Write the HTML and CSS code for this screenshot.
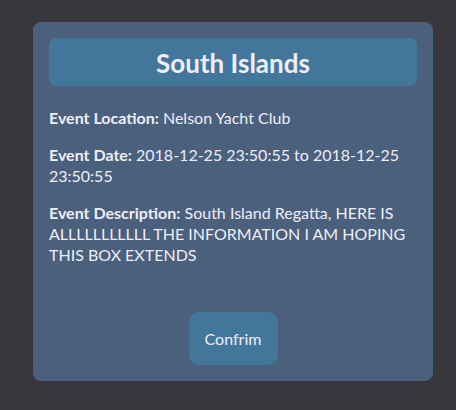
FILE: index.html
```html
<!DOCTYPE html>
<html lang="en">
<head>
<meta charset="utf-8">
<title>South Islands</title>
<link rel="stylesheet" href="styles.css">
</head>
<body>
<div class="page">
  <div class="card">
    <h2 class="card-title">South Islands</h2>
    <p class="field"><b>Event Location:</b> Nelson Yacht Club</p>
    <p class="field"><b>Event Date:</b> 2018-12-25 23:50:55 to 2018-12-25 23:50:55</p>
    <p class="field"><b>Event Description:</b> South Island Regatta, HERE IS ALLLLLLLLLLL THE INFORMATION I AM HOPING THIS BOX EXTENDS</p>
    <button class="confirm" type="button">Confrim</button>
  </div>
</div>
</body>
</html>
```

FILE: styles.css
```css
html, body {
  margin: 0;
  padding: 0;
  background: #38373c;
}

body {
  font-family: Lato, "Open Sans", sans-serif;
  color: #eeeef8;
  font-size: 16px;
}

.page {
  padding: 22px 23px 29px 33px;
  display: flex;
}

.card {
  box-sizing: border-box;
  width: 400px;
  height: 359px;
  background: #4a607c;
  border-radius: 8px;
  padding: 16px;
  display: flex;
  flex-direction: column;
}

.card-title {
  margin: 0;
  background: #43769b;
  border-radius: 7px;
  height: 48px;
  display: flex;
  align-items: center;
  justify-content: center;
  font-size: 26px;
  font-weight: 700;
  padding-top: 2px;
  box-sizing: border-box;
}

.field {
  margin: 21px 0 0;
  line-height: 21px;
}

.field + .field {
  margin-top: 16px;
}

.field b {
  font-weight: 700;
}

.confirm {
  margin: auto auto 0;
  width: 89px;
  height: 53px;
  border: 0;
  border-radius: 10px;
  background: #43769b;
  color: #eeeef8;
  font-family: inherit;
  font-size: 16px;
  padding: 0;
}
```
